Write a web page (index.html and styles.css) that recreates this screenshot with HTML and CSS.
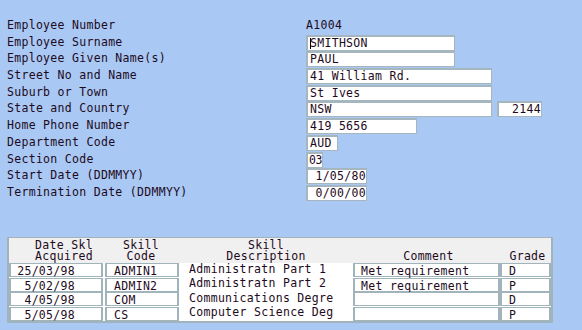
FILE: index.html
```html
<!DOCTYPE html>
<html lang="en">
<head>
    <meta charset="UTF-8">
    <title>Employee Details</title>
    <link rel="stylesheet" href="styles.css">
</head>
<body>
    <!-- Employee header fields -->
    <div class="form">
        <div class="label">Employee Number</div>
        <div class="value">A1004</div>

        <div class="label">Employee Surname</div>
        <div><div class="field w-name"><span class="caret"></span>SMITHSON</div></div>

        <div class="label">Employee Given Name(s)</div>
        <div><div class="field w-name">PAUL</div></div>

        <div class="label">Street No and Name</div>
        <div><div class="field w-street">41 William Rd.</div></div>

        <div class="label">Suburb or Town</div>
        <div><div class="field w-street">St Ives</div></div>

        <div class="label">State and Country</div>
        <div class="pair">
            <div class="field w-street">NSW</div>
            <div class="field w-post right">2144</div>
        </div>

        <div class="label">Home Phone Number</div>
        <div><div class="field w-phone">419 5656</div></div>

        <div class="label">Department Code</div>
        <div><div class="field w-dept">AUD</div></div>

        <div class="label">Section Code</div>
        <div><div class="field w-sect">03</div></div>

        <div class="label">Start Date (DDMMYY)</div>
        <div><div class="field w-date right">1/05/80</div></div>

        <div class="label">Termination Date (DDMMYY)</div>
        <div><div class="field w-date right">0/00/00</div></div>
    </div>

    <!-- Skills table -->
    <div class="skills">
        <div class="head">
            <div>Date Skl<br>Acquired</div>
            <div>Skill<br>Code</div>
            <div>Skill<br>Description</div>
            <div><br>Comment</div>
            <div><br>Grade</div>
        </div>

        <div class="row">
            <div class="cell"><span class="date">25/03/98</span></div>
            <div class="cell">ADMIN1</div>
            <div class="desc">Administratn Part 1</div>
            <div class="cell">Met requirement</div>
            <div class="cell">D</div>
        </div>
        <div class="row">
            <div class="cell"><span class="date">5/02/98</span></div>
            <div class="cell">ADMIN2</div>
            <div class="desc">Administratn Part 2</div>
            <div class="cell">Met requirement</div>
            <div class="cell">P</div>
        </div>
        <div class="row">
            <div class="cell"><span class="date">4/05/98</span></div>
            <div class="cell">COM</div>
            <div class="desc">Communications Degre</div>
            <div class="cell"></div>
            <div class="cell">D</div>
        </div>
        <div class="row">
            <div class="cell"><span class="date">5/05/98</span></div>
            <div class="cell">CS</div>
            <div class="desc">Computer Science Deg</div>
            <div class="cell"></div>
            <div class="cell">P</div>
        </div>
    </div>
</body>
</html>
```

FILE: styles.css
```css
* {
    box-sizing: border-box;
}

body {
    margin: 0;
    width: 582px;
    height: 330px;
    overflow: hidden;
    background: #a9c8f4;
    color: #1e0a1c;
    font-family: "DejaVu Sans Mono", "Liberation Mono", monospace;
    font-size: 11.5px;
    letter-spacing: 0.3px;
}

/* Header form */
.form {
    display: grid;
    grid-template-columns: 299px auto;
    grid-auto-rows: 16.7px;
    padding: 17px 0 0 7px;
}

.label,
.value {
    line-height: 16.7px;
    white-space: nowrap;
}

.field {
    height: 16px;
    margin-top: 1px;
    padding-left: 2px;
    line-height: 13px;
    background: #fff;
    border: 1px solid #a6b6be;
    border-width: 2px 1px 1px 2px;
    white-space: nowrap;
}

.field.right {
    text-align: right;
    padding: 0;
}

.caret {
    display: inline-block;
    width: 1px;
    height: 11px;
    margin-right: -1px;
    vertical-align: -2px;
    background: #000;
}

.pair {
    display: flex;
    gap: 5px;
}

.w-name { width: 149px; }
.w-street { width: 186px; }
.w-post { width: 45px; }
.w-phone { width: 111px; }
.w-dept { width: 32px; }
.w-sect { width: 17px; padding-left: 1px; letter-spacing: -0.5px; }
.w-date { width: 61px; }

/* Skills table */
.skills {
    width: 546px;
    margin: 36px 0 0 7px;
    background: #fff;
    border: 2px solid #a1b4bc;
    border-top-width: 1px;
}

.head,
.row {
    display: grid;
    grid-template-columns: 94px 76px 174px 147px 51px;
}

.head {
    height: 25px;
    padding-top: 2px;
    background: #f0f0f0;
    line-height: 11px;
    text-align: center;
}

.head div:nth-child(1) { padding-left: 16px; }
.head div:nth-child(4) { padding-left: 4px; }
.head div:nth-child(5) { padding-left: 4px; }

.row {
    height: 14.5px;
}

.cell {
    height: 14px;
    margin-top: 0.5px;
    padding: 0 0 0 6px;
    line-height: 14px;
    border: 2px solid #a1b4bc;
    border-width: 1px 2px 1px 2px;
    white-space: nowrap;
}

.row .cell:nth-child(2) {
    margin-left: 2px;
    padding-left: 7px;
}

.row .cell:nth-child(5) {
    padding-left: 7px;
}

.desc {
    padding: 0 0 0 10px;
    line-height: 12px;
    white-space: nowrap;
}

.date {
    display: inline-block;
    width: 58px;
    text-align: right;
}
```
